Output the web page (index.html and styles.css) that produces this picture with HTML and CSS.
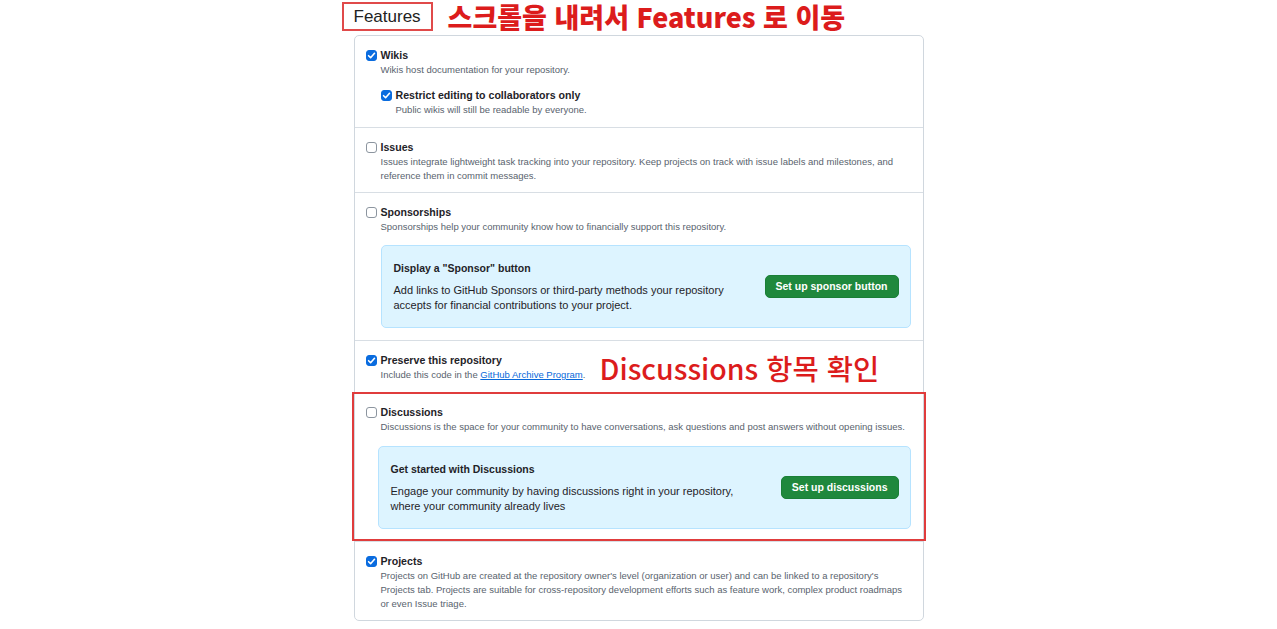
FILE: index.html
```html
<!DOCTYPE html>
<html lang="ko">
<head>
<meta charset="utf-8">
<title>Features</title>
<link rel="stylesheet" href="styles.css">
</head>
<body>
<div class="page">
  <header class="head">
    <div class="head-box">Features</div>
    <div class="note note-top">스크롤을 내려서 Features 로 이동</div>
  </header>

  <div class="panel">
    <section class="feat feat-first">
      <div class="row"><span class="cb on"></span><span class="label">Wikis</span></div>
      <p class="desc">Wikis host documentation for your repository.</p>
      <div class="sub">
        <div class="row"><span class="cb on"></span><span class="label">Restrict editing to collaborators only</span></div>
        <p class="desc">Public wikis will still be readable by everyone.</p>
      </div>
    </section>

    <section class="feat">
      <div class="row"><span class="cb"></span><span class="label">Issues</span></div>
      <p class="desc">Issues integrate lightweight task tracking into your repository. Keep projects on track with issue labels and milestones, and<br>reference them in commit messages.</p>
    </section>

    <section class="feat">
      <div class="row"><span class="cb"></span><span class="label">Sponsorships</span></div>
      <p class="desc">Sponsorships help your community know how to financially support this repository.</p>
      <div class="promo">
        <div class="promo-text">
          <div class="promo-title">Display a "Sponsor" button</div>
          <p class="promo-body">Add links to GitHub Sponsors or third-party methods your repository<br>accepts for financial contributions to your project.</p>
        </div>
        <button class="btn">Set up sponsor button</button>
      </div>
    </section>

    <section class="feat feat-annot">
      <div class="row"><span class="cb on"></span><span class="label">Preserve this repository</span></div>
      <p class="desc">Include this code in the <a class="link" href="#">GitHub Archive Program</a>.</p>
      <div class="note note-side">Discussions 항목 확인</div>
    </section>

    <section class="feat feat-marked">
      <div class="row"><span class="cb"></span><span class="label">Discussions</span></div>
      <p class="desc">Discussions is the space for your community to have conversations, ask questions and post answers without opening issues.</p>
      <div class="promo promo-wide">
        <div class="promo-text">
          <div class="promo-title">Get started with Discussions</div>
          <p class="promo-body">Engage your community by having discussions right in your repository,<br>where your community already lives</p>
        </div>
        <button class="btn">Set up discussions</button>
      </div>
    </section>

    <section class="feat">
      <div class="row"><span class="cb on"></span><span class="label">Projects</span></div>
      <p class="desc">Projects on GitHub are created at the repository owner's level (organization or user) and can be linked to a repository's<br>Projects tab. Projects are suitable for cross-repository development efforts such as feature work, complex product roadmaps<br>or even Issue triage.</p>
    </section>
  </div>
</div>
</body>
</html>
```

FILE: styles.css
```css
* { box-sizing: border-box; }

html, body {
  margin: 0;
  padding: 0;
  background: #ffffff;
}

body {
  font-family: "Liberation Sans", Arial, sans-serif;
  color: #1f2328;
}

.page {
  width: 570px;
  margin: 0 auto;
}

.head {
  display: flex;
  align-items: center;
  height: 35px;
  padding-bottom: 2px;
  margin-left: -12px;
}

.head-box {
  height: 29px;
  border: 2px solid #e04a4a;
  padding: 0 10px;
  font-size: 17px;
  line-height: 25px;
  color: #222222;
}

.note {
  font-family: "Noto Sans CJK KR", "Noto Sans", sans-serif;
  color: #dc1c1c;
  white-space: nowrap;
}

.note-top {
  margin-left: 15px;
  font-size: 27px;
  font-weight: 900;
  line-height: 33px;
}

.panel {
  border: 1px solid #d0d7de;
  border-radius: 5px;
  background: #ffffff;
}

.feat {
  padding: 12px 12px 9px 11px;
  border-top: 1px solid #d8dee4;
}

.feat-first {
  border-top: none;
  padding-bottom: 10px;
}

.feat-annot {
  position: relative;
  padding-bottom: 10px;
}

.note-side {
  position: absolute;
  left: 245px;
  top: 11px;
  font-size: 28.5px;
  font-weight: 500;
  line-height: 32px;
}

.feat-marked {
  position: relative;
}

.feat-marked::after {
  content: "";
  position: absolute;
  top: -1px;
  bottom: 0;
  left: -3px;
  right: -3px;
  border: 2px solid #e03c3c;
  pointer-events: none;
}

.row {
  display: flex;
  align-items: center;
  gap: 4px;
  height: 15px;
}

.cb {
  flex: none;
  width: 11px;
  height: 11px;
  border: 1px solid #8c959f;
  border-radius: 3px;
  background: #ffffff;
}

.cb.on {
  border-color: #0a6cdf;
  background: #0a6cdf url("data:image/svg+xml;utf8,<svg xmlns='http://www.w3.org/2000/svg' viewBox='0 0 11 11'><path d='M2.6 5.7 L4.6 7.7 L8.5 3.3' fill='none' stroke='white' stroke-width='1.6' stroke-linecap='round' stroke-linejoin='round'/></svg>") center / 11px 11px no-repeat;
}

.label {
  font-size: 10.6px;
  font-weight: 700;
  line-height: 15px;
  color: #1f2328;
}

.desc {
  margin: 0 0 0 15px;
  font-size: 9.5px;
  line-height: 14px;
  color: #59636e;
}

.link {
  color: #0969da;
  text-decoration: underline;
}

.sub {
  margin: 11px 0 0 15px;
}

.promo {
  display: flex;
  align-items: center;
  justify-content: space-between;
  margin: 11px 0 3px 15px;
  padding: 14px 11px 14px 12px;
  background: #ddf4ff;
  border: 1px solid #b6e3ff;
  border-radius: 5px;
}

.promo-wide {
  margin-top: 12px;
  margin-left: 12px;
}

.promo-title {
  font-size: 10.5px;
  font-weight: 700;
  line-height: 16px;
  color: #1f2328;
}

.promo-body {
  margin: 7px 0 0;
  font-size: 11px;
  line-height: 15px;
  color: #1f2328;
}

.btn {
  flex: none;
  height: 23px;
  padding: 0 10px;
  border: 1px solid #1a7f37;
  border-radius: 5px;
  background: #1f883d;
  color: #ffffff;
  font-family: "Liberation Sans", Arial, sans-serif;
  font-size: 10.5px;
  font-weight: 700;
  line-height: 21px;
}
```
